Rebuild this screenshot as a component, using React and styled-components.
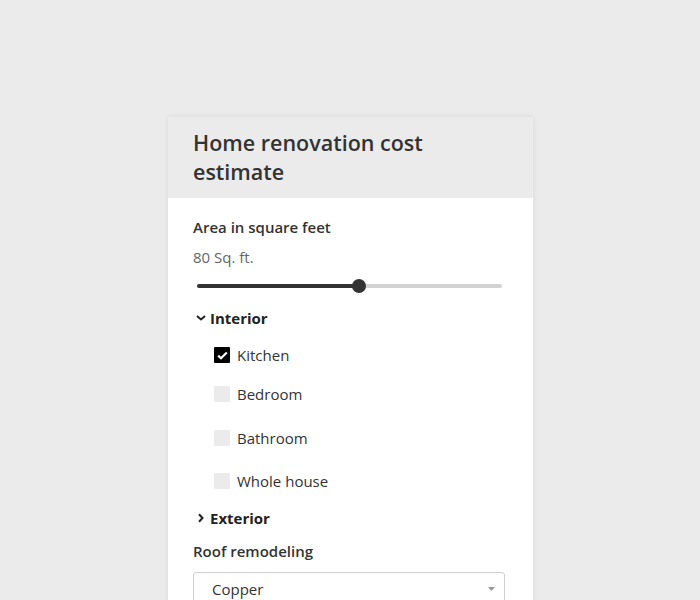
import React from "react";
import styled, { createGlobalStyle } from "styled-components";

const Global = createGlobalStyle`
  html, body { margin: 0; padding: 0; background: #ebebeb; }
  body { font-family: "Open Sans", "Noto Sans", sans-serif; color: #333; }
  * { box-sizing: border-box; }
`;

const Page = styled.div`
  display: flex;
  justify-content: flex-start;
  padding: 117px 0 0 168px;
  height: 600px;
  overflow: hidden;
`;

const Card = styled.div`
  width: 365px;
  background: #fff;
  box-shadow: 0 0 6px rgba(0, 0, 0, 0.08);
  align-self: flex-start;
`;

const Header = styled.div`
  background: #ebebeb;
  padding: 11px 25px 12px;
`;

const Title = styled.h1`
  margin: 0;
  font-size: 21.5px;
  line-height: 29px;
  font-weight: 600;
  color: #333;
`;

const Body = styled.div`
  padding: 18px 25px 20px;
  display: flex;
  flex-direction: column;
`;

const Label = styled.div`
  margin-top: ${(p) => p.$mt || 0}px;
  font-size: 15px;
  font-weight: 600;
  line-height: 22px;
  color: #333;
`;

const Value = styled.div`
  margin-top: 8px;
  font-size: 15px;
  line-height: 22px;
  color: #666;
`;

const Slider = styled.div`
  position: relative;
  margin: 11px 6px 0 4px;
  height: 14px;
  display: flex;
  align-items: center;
`;

const Track = styled.div`
  height: 4px;
  width: 100%;
  border-radius: 2px;
  background: #d2d2d2;
`;

const Fill = styled.div`
  height: 4px;
  border-radius: 2px;
  background: #333;
`;

const Thumb = styled.div`
  position: absolute;
  top: 0;
  width: 14px;
  height: 14px;
  margin-left: -7px;
  border-radius: 50%;
  background: #333;
`;

const Section = styled.div`
  display: flex;
  align-items: center;
  gap: 4px;
  margin-top: ${(p) => p.$mt}px;
  margin-left: 3px;
  font-size: 15px;
  font-weight: 700;
  line-height: 22px;
  color: #222;
`;

const Options = styled.div`
  display: flex;
  flex-direction: column;
  padding-left: 21px;
`;

const Option = styled.label`
  display: flex;
  align-items: center;
  gap: 7px;
  margin-top: ${(p) => p.$mt}px;
  font-size: 15px;
  line-height: 22px;
  color: #333;
`;

const Box = styled.span`
  width: 16px;
  height: 16px;
  border-radius: 1px;
  background: ${(p) => (p.$checked ? "#000" : "#ebebeb")};
  display: flex;
  align-items: center;
  justify-content: center;
`;

const Select = styled.div`
  margin-top: 10px;
  height: 34px;
  width: 312px;
  border: 1px solid #cfcfcf;
  border-radius: 3px;
  padding: 0 9px 0 18px;
  display: flex;
  align-items: center;
  justify-content: space-between;
  font-size: 15px;
  color: #333;
`;

const Chevron = ({ dir }) => (
  <svg width="10" height="10" viewBox="0 0 10 10">
    {dir === "down" ? (
      <path d="M1 3 L5 6.5 L9 3" fill="none" stroke="#222" strokeWidth="2" />
    ) : (
      <path d="M3 1.2 L6.5 5 L3 8.8" fill="none" stroke="#222" strokeWidth="2" />
    )}
  </svg>
);

const Check = () => (
  <svg width="11" height="9" viewBox="0 0 11 9">
    <path d="M1.2 4.6 L4 7.3 L9.8 1.5" fill="none" stroke="#fff" strokeWidth="2.2" />
  </svg>
);

const options = [
  { label: "Kitchen", checked: true, mt: 15 },
  { label: "Bedroom", checked: false, mt: 17 },
  { label: "Bathroom", checked: false, mt: 22 },
  { label: "Whole house", checked: false, mt: 21 },
];

export default function App() {
  const pct = 53.1;
  return (
    <>
      <Global />
      <Page>
        <Card>
          <Header>
            <Title>
              Home renovation cost
              <br />
              estimate
            </Title>
          </Header>
          <Body>
            <Label>Area in square feet</Label>
            <Value>80 Sq. ft.</Value>
            <Slider>
              <Track>
                <Fill style={{ width: `${pct}%` }} />
              </Track>
              <Thumb style={{ left: `${pct}%` }} />
            </Slider>
            <Section $mt={14}>
              <Chevron dir="down" />
              Interior
            </Section>
            <Options>
              {options.map((o) => (
                <Option key={o.label} $mt={o.mt}>
                  <Box $checked={o.checked}>{o.checked && <Check />}</Box>
                  {o.label}
                </Option>
              ))}
            </Options>
            <Section $mt={15}>
              <Chevron dir="right" />
              Exterior
            </Section>
            <Label $mt={11}>Roof remodeling</Label>
            <Select>
              Copper
              <svg width="7" height="4" viewBox="0 0 7 4">
                <path d="M0 0 H7 L3.5 4 Z" fill="#999" />
              </svg>
            </Select>
          </Body>
        </Card>
      </Page>
    </>
  );
}
